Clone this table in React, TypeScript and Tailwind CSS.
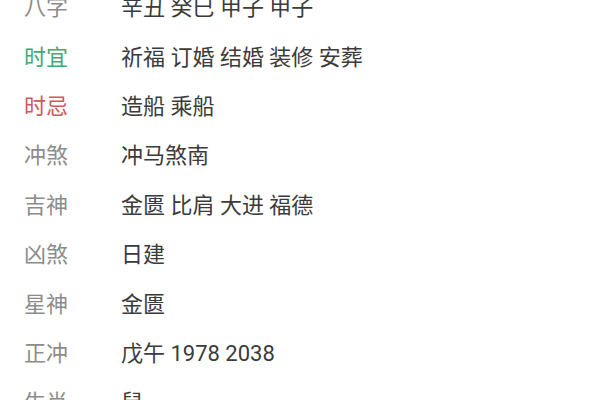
const rows: { label: string; value: string; tone?: "good" | "bad" }[] = [
  { label: "八字", value: "辛丑 癸巳 甲子 甲子" },
  { label: "时宜", value: "祈福 订婚 结婚 装修 安葬", tone: "good" },
  { label: "时忌", value: "造船 乘船", tone: "bad" },
  { label: "冲煞", value: "冲马煞南" },
  { label: "吉神", value: "金匮 比肩 大进 福德" },
  { label: "凶煞", value: "日建" },
  { label: "星神", value: "金匮" },
  { label: "正冲", value: "戊午 1978 2038" },
  { label: "生肖", value: "鼠" },
];

export default function App() {
  return (
    <div className="w-[600px] h-[400px] overflow-hidden bg-white font-['Roboto','Noto_Sans_CJK_SC',sans-serif]">
      <div className="flex flex-col -mt-[17px]">
        {rows.map((row) => (
          <div key={row.label} className="flex items-center h-[49.4px] text-[22px]">
            <span
              className={
                "w-[121px] pl-[24px] " +
                (row.tone === "good"
                  ? "text-[#3fac74]"
                  : row.tone === "bad"
                    ? "text-[#d0585c]"
                    : "text-[#8c8c8c]")
              }
            >
              {row.label}
            </span>
            <span className="text-[#3b3b3b]">{row.value}</span>
          </div>
        ))}
      </div>
    </div>
  );
}
